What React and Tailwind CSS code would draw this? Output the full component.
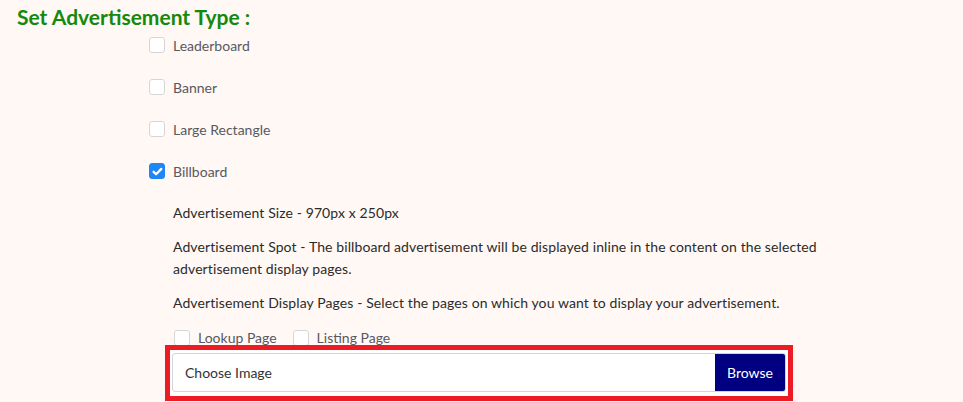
import React, { useState } from 'react';

const Box = ({ checked, onClick }) => (
  <span
    onClick={onClick}
    className={`flex h-4 w-4 shrink-0 items-center justify-center rounded-[3px] border ${
      checked ? 'border-[#1f86f5] bg-[#1f86f5]' : 'border-[#d6d6d6] bg-white'
    }`}
  >
    {checked && (
      <svg viewBox="0 0 16 16" className="h-[13px] w-[13px]" fill="none" stroke="white" strokeWidth="2.8" strokeLinecap="round" strokeLinejoin="round">
        <path d="M3.2 8.4l3.1 3 6.4-6.6" />
      </svg>
    )}
  </span>
);

const AdTypes = ['Leaderboard', 'Banner', 'Large Rectangle', 'Billboard'];

const App = () => {
  const [selected, setSelected] = useState('Billboard');
  const [pages, setPages] = useState({ lookup: false, listing: false });

  return (
    <div className="min-h-[402px] w-full overflow-hidden bg-[#fff8f4] font-['Segoe_UI','Lato',sans-serif] text-[14px]">
      <h2 className="pl-[17px] pt-[4px] text-[21px] font-bold leading-[26px] text-[#14890b]">
        Set Advertisement Type :
      </h2>

      <div className="ml-[149px] flex flex-col gap-[12px]">
        {AdTypes.map((t) => (
          <label key={t} className="flex h-[30px] items-center gap-[8px] text-[#58585f]">
            <Box checked={selected === t} onClick={() => setSelected(t)} />
            <span>{t}</span>
          </label>
        ))}
      </div>

      <div className="ml-[173px] mt-[16px] flex flex-col gap-[12px] leading-[22px] tracking-[0.1px] text-[#2b2b2b]">
        <p>Advertisement Size - 970px x 250px</p>
        <p className="w-[650px]">
          Advertisement Spot - The billboard advertisement will be displayed inline in the content on the selected
          advertisement display pages.
        </p>
        <p>Advertisement Display Pages - Select the pages on which you want to display your advertisement.</p>
      </div>

      <div className="ml-[174px] mt-[15px] flex h-[17px] items-start text-[#58585f]">
        <label className="flex items-center gap-[8px] leading-[17px]">
          <Box checked={pages.lookup} onClick={() => setPages({ ...pages, lookup: !pages.lookup })} />
          <span>Lookup Page</span>
        </label>
        <label className="ml-[16px] flex items-center gap-[8px] leading-[17px]">
          <Box checked={pages.listing} onClick={() => setPages({ ...pages, listing: !pages.listing })} />
          <span>Listing Page</span>
        </label>
      </div>

      <div className="relative ml-[165px] -mt-[1px] w-[628px] border-[5px] border-[#ed1c24] bg-white px-[2px] pb-[4px] pt-[3px]">
        <div className="flex h-[39px] overflow-hidden rounded-[3px] border border-[#d3d3d8] bg-white">
          <div className="flex flex-1 items-center pl-[12px] text-[#333]">Choose Image</div>
          <button className="w-[70px] bg-[#000080] text-white">Browse</button>
        </div>
      </div>
    </div>
  );
};

export default App;
